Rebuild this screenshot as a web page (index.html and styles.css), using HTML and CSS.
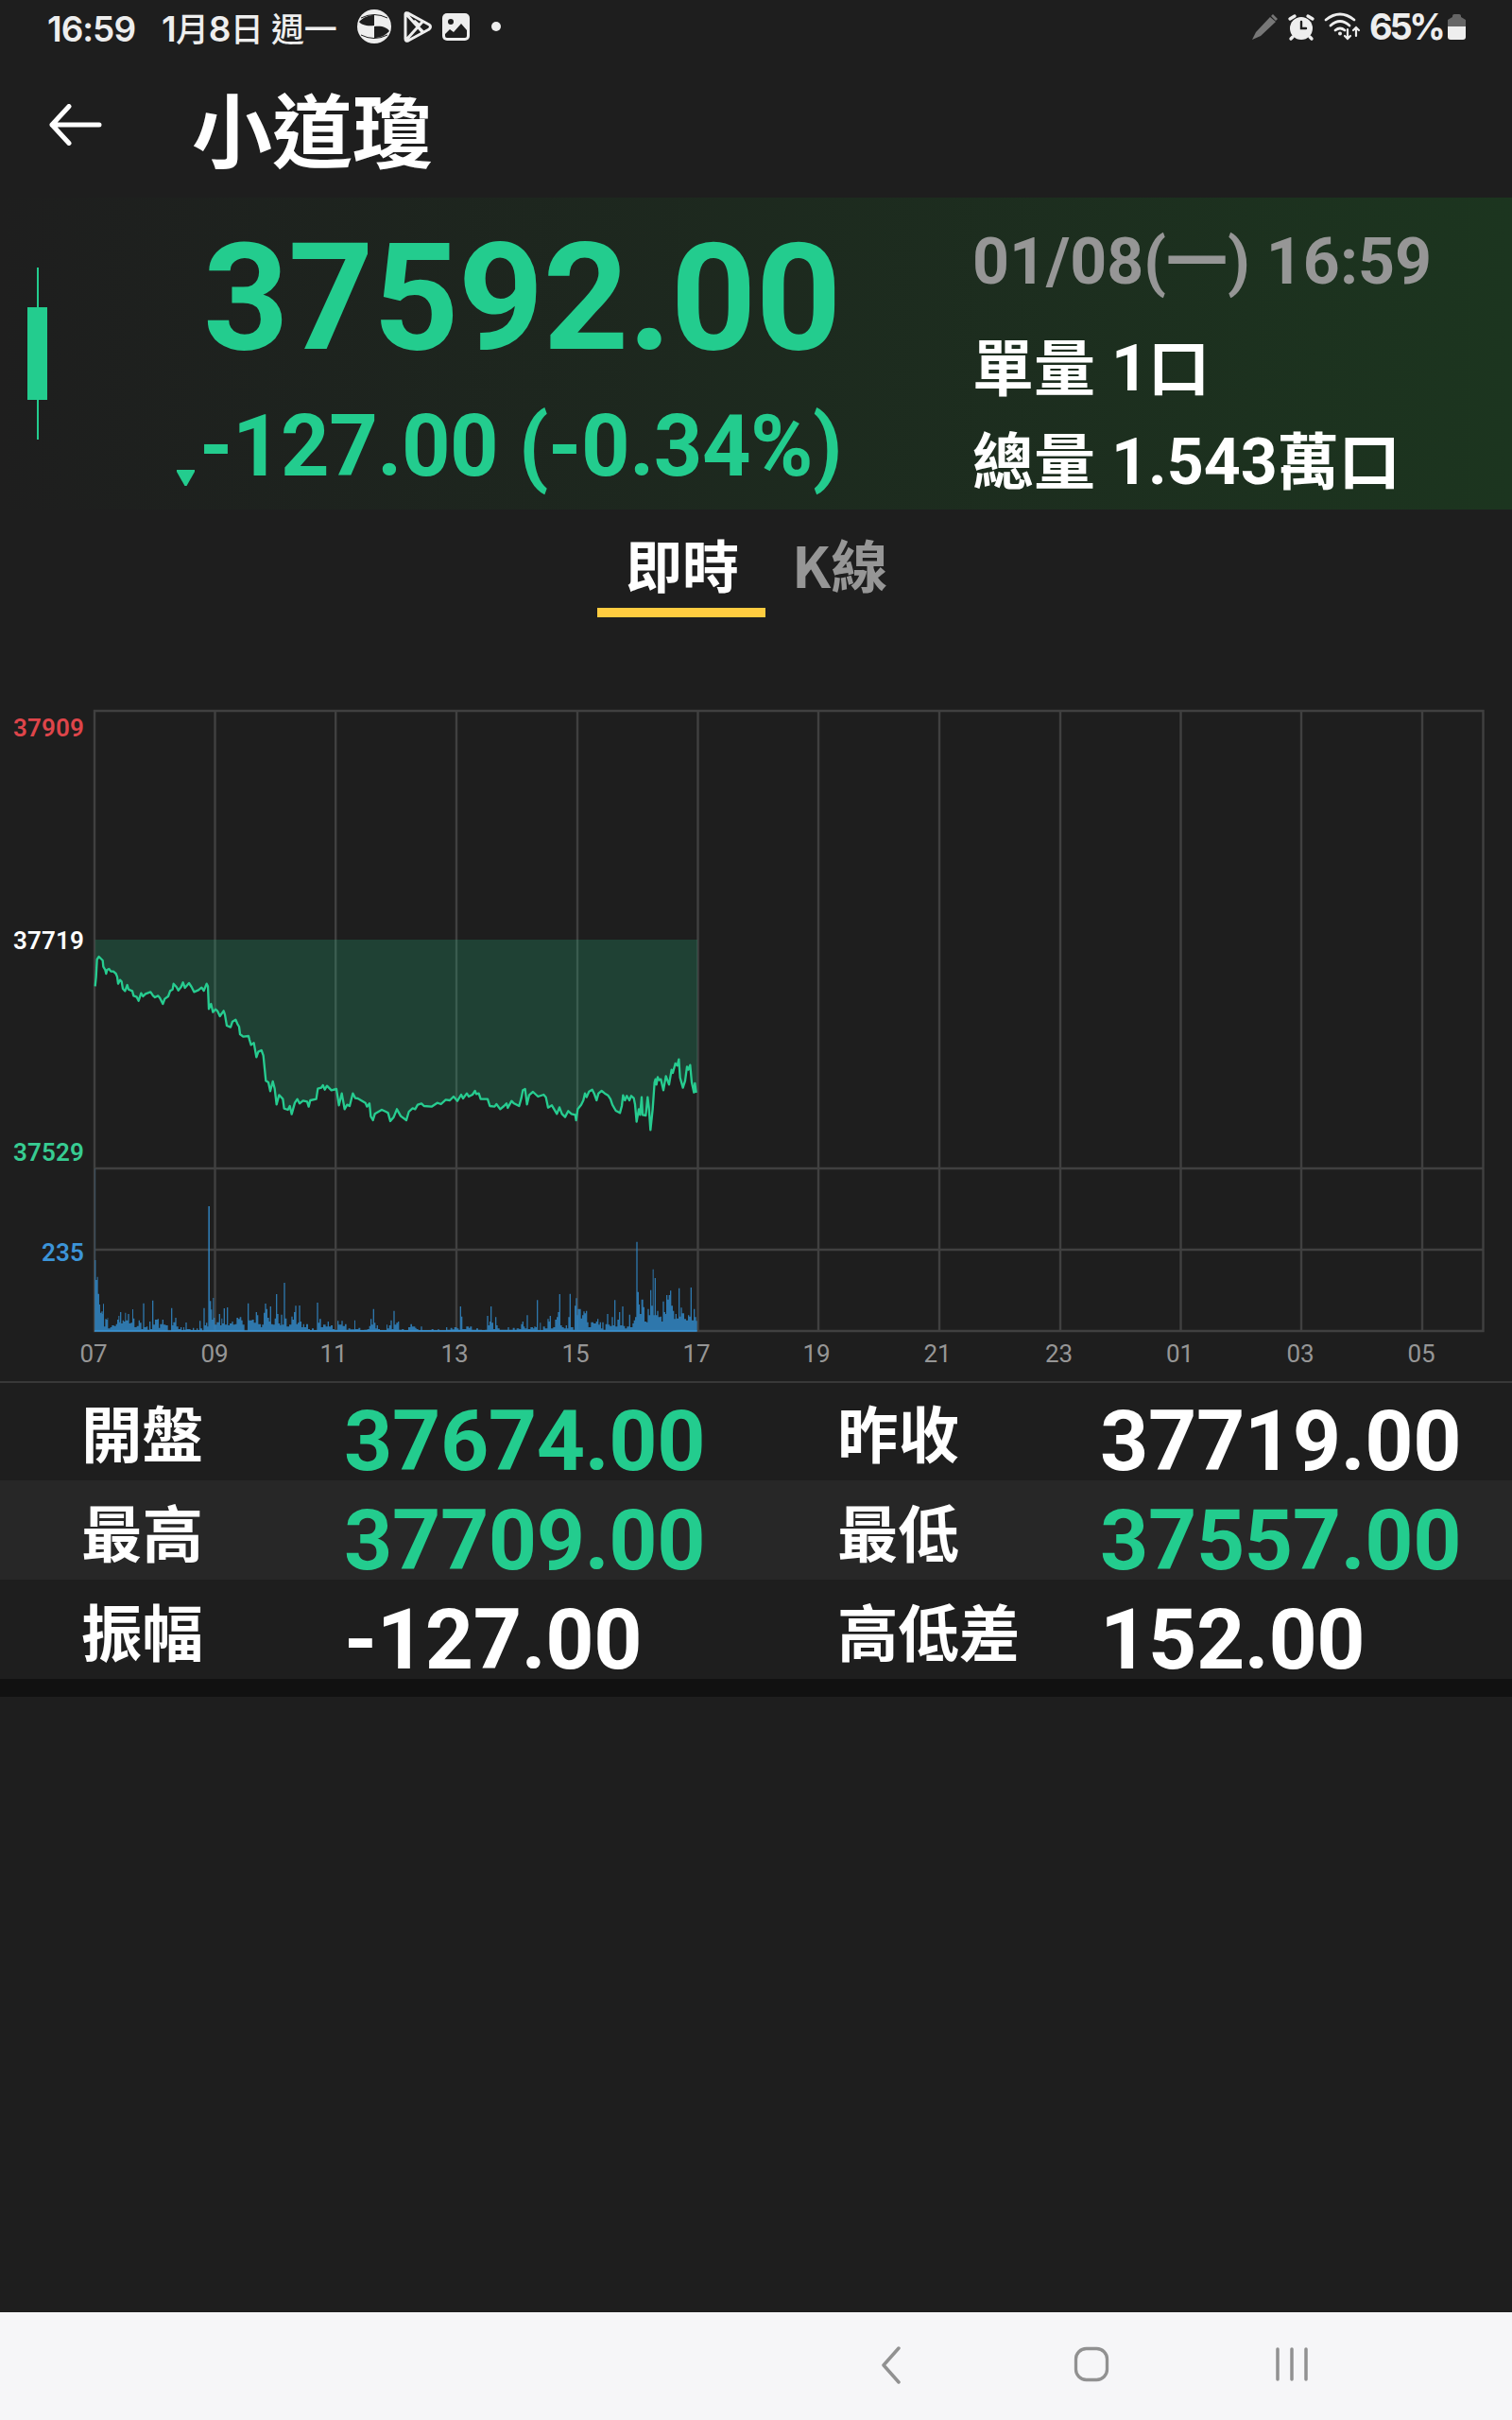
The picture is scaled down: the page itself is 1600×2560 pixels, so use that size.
FILE: index.html
```html
<!DOCTYPE html>
<html lang="zh-Hant">
<head>
<meta charset="utf-8">
<title>小道瓊</title>
<link rel="stylesheet" href="styles.css">
</head>
<body>
<div class="screen">
  <header class="status">
    <span class="status-time">16:59</span>
    <span class="status-date">1<b>月</b>8<b>日</b> <b>週一</b></span>
    <svg class="status-apps" width="160" height="56" viewBox="374 0 160 56">
      <circle cx="396" cy="28" r="18" fill="#eee"/>
      <path d="M382 19Q396 12 410 19M382 37Q396 44 410 37" fill="none" stroke="#1e1e1e" stroke-width="1"/>
      <path d="M396 27C388 28 382 26 380 23C385 18 390 16 396 16ZM396 28C404 27 410 29 412 33C407 38 402 40 396 40Z" fill="#1e1e1e"/>
      <g fill="none" stroke="#eee" stroke-width="3" stroke-linejoin="round"><path d="M429 15Q429 13 432 14L454 26Q457 28 454 31L432 43Q429 44 429 41ZM430 15L448 35M430 42L448 22M444 27L438 22M443 29L448 34"/></g>
      <rect x="468" y="14" width="29" height="29" rx="5" fill="#eee"/>
      <circle cx="477" cy="23" r="3" fill="#1e1e1e"/>
      <path d="M471 36L476 31L480 34L488 25L494 32V38Q494 40 492 40H473Q471 40 471 38Z" fill="#1e1e1e"/>
      <circle cx="525" cy="28" r="5" fill="#eee"/>
    </svg>
    <svg class="status-system" width="122" height="56" viewBox="1322 0 122 56">
      <path d="M1329 34L1344 18L1350 23L1334 38L1325 42ZM1345 17L1347 15L1352 20L1350 22Z" fill="#777"/>
      <g stroke="#eee" fill="none" stroke-linecap="round">
        <circle cx="1377" cy="30" r="12" fill="#eee" stroke="none"/>
        <path d="M1365 20L1370 17M1389 20L1384 17M1368 39L1366 41M1386 39L1388 41" stroke-width="3.4"/>
        <path d="M1377 23V30H1382" stroke="#1e1e1e" stroke-width="2.4"/>
        <path d="M1403 21Q1418 9 1433 21M1408 27Q1418 18 1428 27M1413 32Q1418 28 1423 32" stroke-width="2.8"/>
        <circle cx="1418" cy="35.500" r="2" fill="#eee" stroke="none"/>
        <path d="M1426 31V40M1423 38L1426 41L1429 38M1435 38V29M1432 32L1435 29L1438 32" stroke-width="2.2"/>
      </g>
    </svg>
    <span class="status-percent">65%</span>
    <svg class="status-battery" width="19" height="27" viewBox="0 0 19 27">
      <path d="M5 2Q5 0 7 0H12Q14 0 14 2V3L19 6V13H0V6L5 3Z" fill="#666"/>
      <path d="M0 13H19V24Q19 27 16 27H3Q0 27 0 24Z" fill="#eee"/>
    </svg>
  </header>

  <div class="titlebar">
    <svg width="56" height="44" viewBox="0 0 56 44"><path d="M21 2.500L3 22L21 41.500M3 22H53" fill="none" stroke="#fff" stroke-width="5" stroke-linecap="round" stroke-linejoin="round"/></svg>
    <h1>小道瓊</h1>
  </div>

  <section class="quote">
    <svg class="candle" width="21" height="182" viewBox="0 0 21 182"><path d="M11 0V182" stroke="#23cc8e" stroke-width="2"/><path d="M0 42H21V140H0Z" fill="#23cc8e"/></svg>
    <div class="quote-main">
      <div class="price">37592.00</div>
      <div class="change"><svg width="19" height="17" viewBox="0 0 19 17"><path d="M0 0H19V2L10.500 17H8.500L0 2Z" fill="#23cc8e"/></svg><span>-127.00 (-0.34%)</span></div>
    </div>
    <div class="quote-meta">
      <div class="when">01/08(<b>一</b>) 16:59</div>
      <div><b>單量</b> 1<b>口</b></div>
      <div class="total"><b>總量</b> 1.543<b>萬口</b></div>
    </div>
  </section>

  <nav class="tabs">
    <span class="tab active">即時</span>
    <span class="tab">K線</span>
  </nav>

  <svg class="chart" width="1600" height="722" viewBox="0 739 1600 722">
    <g stroke="#404040" stroke-width="2.4" fill="none">
      <path d="M100 752H1569.500V1408H100ZM100 1236H1570M100 1322H1570"/>
      <path d="M227.500 752V1408M355.200 752V1408M483 752V1408M611 752V1408M738.500 752V1408M866 752V1408M994 752V1408M1122 752V1408M1249.500 752V1408M1377 752V1408M1505 752V1408"/>
    </g>
    <g transform="translate(80 980) scale(.33333)">
      <path id="price-area" fill="#23cc8e" fill-opacity=".2"/>
      <path id="price-line" fill="none" stroke="#27cc90" stroke-width="7" stroke-linejoin="round"/>
    </g>
    <g transform="translate(0 1200) scale(.33333)">
      <path d="M302 108V624" stroke="#3187c6" stroke-opacity=".25" stroke-width="3"/>
      <path id="volume" fill="#3187c6" fill-opacity=".85"/>
      <path d="M300 624H2213" stroke="#3994d6" stroke-width="4"/>
    </g>
    <g class="y-label" text-anchor="end">
      <text x="89" y="779" fill="#de454a">37909</text>
      <text x="89" y="1004" fill="#fff">37719</text>
      <text x="89" y="1228" fill="#37cc92">37529</text>
      <text x="89" y="1334" fill="#3c94d8">235</text>
    </g>
    <g class="x-label" text-anchor="middle" fill="#969696">
      <text x="99" y="1441">07</text><text x="227" y="1441">09</text><text x="353" y="1441">11</text><text x="481" y="1441">13</text><text x="609" y="1441">15</text><text x="737" y="1441">17</text><text x="864" y="1441">19</text><text x="992" y="1441">21</text><text x="1120.500" y="1441">23</text><text x="1248.500" y="1441">01</text><text x="1376" y="1441">03</text><text x="1504" y="1441">05</text>
    </g>
  </svg>

  <section class="stats">
    <div class="row"><span>開盤</span><em class="down">37674.00</em><span>昨收</span><em>37719.00</em></div>
    <div class="row alt"><span>最高</span><em class="down">37709.00</em><span>最低</span><em class="down">37557.00</em></div>
    <div class="row"><span>振幅</span><em>-127.00</em><span>高低差</span><em>152.00</em></div>
  </section>

  <footer class="navbar">
    <svg width="21" height="40" viewBox="0 0 21 40"><path d="M19 2L3 20L19 38" fill="none" stroke="#919191" stroke-width="3.500" stroke-linecap="round" stroke-linejoin="round"/></svg>
    <svg width="38" height="38" viewBox="0 0 38 38"><rect x="2.500" y="2.500" width="33" height="33" rx="11" fill="none" stroke="#919191" stroke-width="3.300"/></svg>
    <svg width="36" height="38" viewBox="0 0 36 38"><path d="M3 3V35M18 3V35M33 3V35" stroke="#919191" stroke-width="3.500" stroke-linecap="round"/></svg>
  </footer>
</div>
<script src="chart.js"></script>
</body>
</html>
```

FILE: styles.css
```css
* { box-sizing: border-box; }
body { margin: 0; background: #1e1e1e; color: #fff; font-family: Roboto, "Noto Sans CJK TC", sans-serif; }
svg { display: block; flex: none; }
.screen { width: 1600px; height: 2560px; display: flex; flex-direction: column; overflow: hidden; }

.status { height: 58px; display: flex; align-items: flex-start; padding-left: 50px; color: #eee; font-family: Inter, "Noto Sans CJK TC", sans-serif; font-weight: 600; white-space: nowrap; }
.status-time, .status-date { font-size: 37px; line-height: 61px; letter-spacing: -1px; }
.status-time { width: 121px; }
.status-date { width: 203px; letter-spacing: -.7px; }
.status-date b { font-size: 35px; font-weight: 500; line-height: 0; letter-spacing: -.3px; }
.status-system { margin-left: 788px; }
.status-percent { width: 88px; padding-left: 5px; font-size: 38px; font-weight: 700; line-height: 56px; letter-spacing: -3.3px; }
.status-battery { margin-top: 15px; }

.titlebar { height: 151px; display: flex; padding-left: 52px; gap: 95px; }
.titlebar svg { margin-top: 52px; }
.titlebar h1 { margin: 0; font-size: 85px; font-weight: 700; line-height: 168px; }

.quote { height: 330px; display: flex; background: linear-gradient(90deg, #1e1e1e, #1c351f); white-space: nowrap; }
.candle { margin: 74px 0 0 29px; }
.quote-main { width: 977px; padding: 27px 0 0 137px; color: #23cc8e; font-weight: 700; }
.price { padding-left: 28px; font-size: 158px; line-height: 158px; letter-spacing: -.7px; }
.change { display: flex; gap: 5px; margin-top: 33px; font-size: 90px; line-height: 92px; font-weight: 700; letter-spacing: -.5px; }
.change svg { margin-top: 70px; }
.quote-meta { padding-top: 34px; margin-left: 2px; font-size: 68px; line-height: 68px; font-weight: 700; }
.quote-meta b { font-size: 65px; font-weight: 700; line-height: 0; }
.when { color: #969696; margin-bottom: 45px; }
.total { margin-top: 31px; }

.tabs { height: 200px; display: flex; padding-left: 632px; }
.tab { height: 114px; font: 700 60px/114px "Noto Sans CJK TC", sans-serif; color: #969696; padding: 0 28px; white-space: nowrap; }
.tab.active { width: 178px; padding: 0 30px; color: #fff; border-bottom: 10px solid #ffcc40; }

.y-label { font: 600 26px Roboto, sans-serif; letter-spacing: .15px; }
.x-label { font: 400 26px Roboto, sans-serif; }

.stats { border-top: 2px solid #383838; border-bottom: 19px solid #111; }
.row { height: 105px; display: grid; grid-template-columns: 278px 522px 278px 1fr; padding-left: 86px; white-space: nowrap; }
.row:first-child { height: 103px; }
.row.alt { background: #272727; }
.row span { font-size: 64.5px; font-weight: 700; line-height: 119px; }
.row em { font-style: normal; font-size: 89.500px; font-weight: 700; line-height: 127px; letter-spacing: -.4px; }
.row:first-child span { line-height: 115px; }
.row:first-child em { line-height: 123px; }
.down { color: #23cc8e; }

.navbar { height: 114px; margin-top: auto; background: #f6f6f8; display: flex; padding: 36px 0 0 932px; gap: 183px; }
.navbar svg:last-child { margin-left: -8px; }
```

FILE: chart.js
```javascript
// Price trace, in third-pixel units from the plot origin.
const price = `62,190 65,160 68,105 74,96 80,102 86,108 88,128 94,138 97,150 100,138 106,135 112,143 120,143 128,150 132,160 135,182 141,170 146,175 150,198 157,205 164,186 168,200 180,205 184,220 194,224 200,236 208,212 214,222 222,214 238,208 246,220 252,225 262,220 268,228 277,246 283,230 294,222 300,205 308,200 311,182 320,192 326,203 335,192 341,178 347,195 360,180 368,192 376,208 390,202 400,194 407,204 416,182 420,190 423,262 430,246 436,272 444,263 450,268 458,285 470,268 474,280 480,315 492,320 498,302 508,296 514,310 519,318 522,342 532,350 549,348 552,360 557,376 566,370 574,415 580,398 590,393 596,410 604,490 612,495 618,523 626,492 632,515 638,565 646,535 658,548 662,578 674,582 680,570 686,596 696,560 704,548 711,562 722,553 735,556 740,572 745,552 764,548 769,515 780,512 785,504 791,518 798,506 812,520 828,516 836,568 845,530 854,580 862,566 870,570 880,530 888,545 896,546 920,560 925,572 933,562 937,603 944,615 950,595 972,582 985,588 992,592 999,618 1010,605 1020,580 1032,602 1050,615 1058,588 1070,577 1078,580 1086,566 1098,562 1106,570 1130,572 1148,560 1160,564 1175,550 1188,552 1200,540 1212,554 1224,534 1230,546 1242,530 1248,540 1260,534 1268,522 1272,532 1280,530 1286,548 1308,548 1315,570 1330,572 1336,564 1348,580 1360,570 1368,562 1372,576 1384,554 1392,562 1408,570 1415,545 1420,520 1427,516 1433,565 1440,535 1452,525 1468,540 1486,534 1493,542 1500,575 1512,568 1528,595 1536,574 1544,595 1554,605 1564,586 1574,595 1586,598 1589,615 1594,580 1605,566 1612,552 1617,530 1622,542 1630,524 1640,518 1646,530 1654,552 1660,530 1670,522 1680,530 1690,536 1698,548 1704,566 1715,585 1728,592 1734,570 1738,536 1744,552 1750,538 1758,552 1764,538 1772,545 1776,565 1781,620 1788,580 1792,598 1797,542 1800,598 1810,600 1816,542 1820,575 1825,646 1832,580 1838,495 1841,485 1844,502 1848,478 1852,488 1858,485 1866,520 1874,475 1884,502 1892,455 1896,465 1904,435 1910,442 1915,422 1919,480 1928,512 1935,490 1941,445 1945,455 1951,440 1956,495 1963,527 1966,498 1970,528`;
document.getElementById('price-line').setAttribute('d', 'M' + price.split(' ').join('L'));
document.getElementById('price-area').setAttribute('d', 'M62,42L' + price.split(' ').join('L') + 'L1974,528V42Z');

// Volume steps as "x height"; each step runs up to the next x.
const morning = '301 225,304 162,308 172,311 118,315 84,318 58,322 62,326 54,327 86,330 14,334 38,338 36,341 42,343 8,350 12,355 18,362 16,368 22,372 36,376 48,379 28,381 60,385 24,389 34,393 30,397 58,400 34,406 54,410 24,415 26,420 69,423 40,427 12,434 16,440 34,444 26,449 6,454 88,458 12,464 14,469 4,474 30,478 6,483 97,487 20,492 36,500 38,504 10,508 22,515 36,519 20,526 18,533 0,543 73,547 18,550 28,556 42,560 14,566 6,573 12,577 2,582 12,585 4,589 27,593 6,605 3,612 10,616 3,624 8,628 3,633 32,637 8,642 0,646 73,650 18,654 26,658 14,661 396,666 95,670 68,673 36,676 105,679 42,682 20,688 28,695 54,699 18,703 40,706 24,710 72,714 20,720 75,724 18,729 24,736 30,740 20,746 22,751 42,756 38,761 44,766 34,770 20,776 0,786 88,790 34,800 36,806 26,812 60,816 50,820 22,828 12,832 20,837 58,841 87,845 70,849 42,854 30,857 78,861 22,866 20,872 40,876 117,880 54,884 24,889 18,892 52,896 20,901 153,905 40,910 14,918 20,925 46,929 36,933 60,937 80,941 22,945 26,949 81,953 30,957 12,962 22,966 12,972 22,978 6,984 3,990 8,996 3,1006 90,1010 26,1014 38,1019 12,1026 20,1034 14,1040 30,1044 14,1050 18,1056 6,1062 4,1071 32,1075 20,1084 32,1088 16,1095 22,1100 4,1106 8,1112 5,1125 34,1128 6,1138 10,1144 3,1156 4,1166 6,1172 16,1176 38,1180 20,1184 70,1188 26,1192 8,1196 18';
const afternoon = '0 6,6 3,27 20,30 8,35 18,40 34,44 6,49 64,53 20,58 26,63 30,67 4,76 6,82 3,96 12,103 22,108 14,118 10,122 6,128 2,136 14,140 3,170 6,176 2,190 6,194 2,216 12,220 4,230 10,236 5,242 12,250 8,256 4,260 78,264 46,268 6,280 14,288 10,292 14,298 4,312 8,318 4,330 3,340 4,346 48,350 18,354 30,357 78,361 26,366 6,372 44,376 18,380 8,386 4,412 12,416 4,428 10,434 4,440 8,448 6,454 22,458 30,462 14,466 8,472 50,476 6,484 12,492 8,496 14,500 12,504 98,508 2,514 26,517 3,524 14,530 8,538 38,542 30,545 48,549 8,556 12,562 36,567 44,571 60,575 117,579 18,584 12,590 8,596 18,600 8,604 44,608 118,612 12,620 4,624 80,628 104,632 50,634 70,644 40,648 50,652 62,656 56,660 64,664 28,668 12,676 28,684 24,692 30,696 38,700 20,704 28,708 8,712 28,716 4,722 22,727 54,731 20,736 16,742 44,746 18,750 98,754 14,760 36,765 60,769 18,775 78,779 16,784 8,790 14,797 52,801 12,808 24,812 34,816 44,820 283,824 124,828 84,831 54,836 100,842 76,846 30,852 28,856 70,860 50,864 130,868 80,872 196,875 50,878 168,882 50,886 64,890 44,896 46,900 30,904 94,908 60,912 54,915 114,919 100,923 114,927 128,931 80,936 64,940 38,944 54,948 40,954 136,958 46,961 74,965 56,972 38,978 34,984 50,988 46,992 138,996 34,1002 70,1006 44,1010 32,1013 0';
const steps = (text, shift) => text.split(',').map(s => s.split(' ').map(Number)).map(([x, h]) => [x + shift, h]);
let path = 'M301 624';
for (const [x, h] of [...steps(morning, 0), ...steps(afternoon, 1200)]) path += `H${x}V${624 - h}`;
document.getElementById('volume').setAttribute('d', path + 'V624Z');
```
